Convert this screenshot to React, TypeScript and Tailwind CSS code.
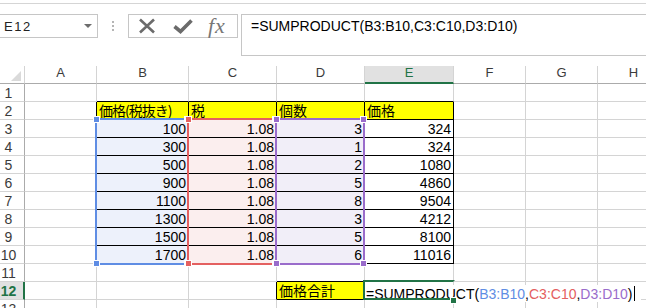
import React from "react";

const COLS = ["A", "B", "C", "D", "E", "F", "G", "H"];
const GRID = "grid grid-cols-[25px_72px_92px_88px_88px_89px_72px_72px_72px] w-max";

const B_VALS = ["100", "300", "500", "900", "1100", "1300", "1500", "1700"];
const D_VALS = ["3", "1", "2", "5", "8", "3", "5", "6"];
const E_VALS = ["324", "324", "1080", "4860", "9504", "4212", "8100", "11016"];

type Val = { text: string; jp?: boolean; tight?: boolean };

function valueAt(r: number, c: number): Val | null {
  if (r === 2) {
    if (c === 1) return { text: "価格(税抜き)", jp: true, tight: true };
    if (c === 2) return { text: "税", jp: true };
    if (c === 3) return { text: "個数", jp: true };
    if (c === 4) return { text: "価格", jp: true };
  }
  if (r >= 3 && r <= 10) {
    const i = r - 3;
    if (c === 1) return { text: B_VALS[i] };
    if (c === 2) return { text: "1.08" };
    if (c === 3) return { text: D_VALS[i] };
    if (c === 4) return { text: E_VALS[i] };
  }
  if (r === 12 && c === 3) return { text: "価格合計", jp: true };
  return null;
}

function cellCls(r: number, c: number) {
  const inTable = r >= 2 && r <= 10;
  const blackR = (inTable && c <= 4) || (r === 12 && (c === 2 || c === 3));
  const blackB = (c >= 1 && c <= 4 && r >= 1 && r <= 10) || (c === 3 && (r === 11 || r === 12));
  let bg = "";
  if ((r === 2 && c >= 1 && c <= 4) || (r === 12 && c === 3)) bg = "bg-[#ffff00]";
  else if (r >= 3 && r <= 10 && c === 1) bg = "bg-[#edf1fb]";
  else if (r >= 3 && r <= 10 && c === 2) bg = "bg-[#fbeeee]";
  else if (r >= 3 && r <= 10 && c === 3) bg = "bg-[#f1eef8]";
  return [
    "h-[18px] border-r border-b",
    blackR ? "border-r-black" : "border-r-[#d4d4d4]",
    blackB ? "border-b-black" : "border-b-[#d4d4d4]",
    bg,
  ].join(" ");
}

// range outline with the little corner squares
const Range = ({ box, fill }: { box: string; fill: string }) => {
  const sq = `absolute w-[5px] h-[5px] ring-1 ring-white ${fill}`;
  return (
    <div className={`absolute border-2 z-20 ${box}`}>
      <span className={`${sq} -left-[3px] -top-[3px]`} />
      <span className={`${sq} -right-[3px] -top-[3px]`} />
      <span className={`${sq} -left-[3px] -bottom-[3px]`} />
      <span className={`${sq} -right-[3px] -bottom-[3px]`} />
    </div>
  );
};

function FormulaBar() {
  return (
    <div className="pt-[3px]">
      <div className="border-t border-[#d5d5d5] pt-[10px] flex items-start">
        {/* Name box */}
        <div className="w-[98px] h-[24px] border-y border-r border-[#c6c6c6] flex items-center justify-between pl-[4px] pr-[5px]">
          <span className="text-[13px] leading-none tracking-[1.5px] text-[#222]">E12</span>
          <span className="w-0 h-0 border-x-[4px] border-x-transparent border-t-[4px] border-t-[#6d6d6d]" />
        </div>

        <div className="ml-[14px] mt-[7px] flex flex-col gap-[2px]">
          <span className="w-[2px] h-[2px] bg-[#b5b5b5]" />
          <span className="w-[2px] h-[2px] bg-[#b5b5b5]" />
          <span className="w-[2px] h-[2px] bg-[#b5b5b5]" />
        </div>

        {/* cancel / enter / fx */}
        <div className="ml-[14px] w-[110px] h-[24px] border border-[#c6c6c6] flex items-center">
          <svg className="ml-[9px]" width="18" height="16" viewBox="0 0 18 16">
            <path d="M2 1.5L16 14.5M16 1.5L2 14.5" stroke="#6b6b6b" strokeWidth="2.6" fill="none" />
          </svg>
          <svg className="ml-[17px]" width="20" height="15" viewBox="0 0 20 15">
            <path d="M1.5 7.5L7.5 12.5L18.5 1.5" stroke="#6b6b6b" strokeWidth="3.6" fill="none" />
          </svg>
          <span className="ml-[15px] font-['Liberation_Serif',serif] italic text-[22px] leading-none text-[#777] tracking-[1px]">
            fx
          </span>
        </div>

        {/* formula input */}
        <div className="ml-[3px] flex-1 h-[42px] border-y border-l border-[#c6c6c6] pl-[9px] pt-[3px] text-[14px] leading-[17px] whitespace-nowrap">
          =SUMPRODUCT(B3:B10,C3:C10,D3:D10)
        </div>
      </div>
    </div>
  );
}

function Sheet() {
  const rows = Array.from({ length: 13 }, (_, i) => i + 1);
  return (
    <div className="relative mt-[10px]">
      {/* column headers */}
      <div className={GRID}>
        <div className="h-[18px] border-r border-r-[#d4d4d4] border-b border-b-[#ababab] flex justify-end items-end pr-[3px] pb-[2px]">
          <svg width="10" height="10" viewBox="0 0 10 10">
            <polygon points="10,0 10,10 0,10" fill="#dadada" />
          </svg>
        </div>
        {COLS.map((col, c) =>
          c === 4 ? (
            <div
              key={col}
              className="h-[18px] bg-[#e1e1e1] border-r border-r-[#d4d4d4] border-b-2 border-b-[#217346] text-center text-[13px] leading-[14px] text-[#217346]"
            >
              {col}
            </div>
          ) : (
            <div
              key={col}
              className="h-[18px] border-r border-r-[#d4d4d4] border-b border-b-[#ababab] text-center text-[13px] leading-[14px] text-[#3b3b3b]"
            >
              {col}
            </div>
          )
        )}
      </div>

      {rows.map((r) => (
        <div key={r} className={GRID}>
          {r === 12 ? (
            <div className="h-[18px] bg-[#e1e1e1] border-r-2 border-r-[#217346] border-b border-b-[#d4d4d4]">
              <span className="block w-[17px] text-center text-[14px] leading-[19px] font-bold text-[#217346]">{r}</span>
            </div>
          ) : (
            <div className="h-[18px] border-r border-r-[#ababab] border-b border-b-[#d4d4d4]">
              <span className="block w-[17px] text-center text-[14px] leading-[19px] text-[#3b3b3b]">{r}</span>
            </div>
          )}
          {COLS.map((col, c) => {
            if (r === 12 && c === 4) {
              // cell being edited: text runs over F..H
              return (
                <div key={col} className={`${cellCls(r, c)} relative z-30 whitespace-nowrap`}>
                  <span className="inline-flex items-start h-[17px] bg-white pl-px pr-[6px] text-[14px] leading-[19px]">
                    <span>=SUMPRODUCT(</span>
                    <span className="text-[#5f8de4]">B3:B10</span>
                    <span>,</span>
                    <span className="text-[#e46060]">C3:C10</span>
                    <span>,</span>
                    <span className="text-[#9a6ccb]">D3:D10</span>
                    <span>)</span>
                    <span className="ml-px mt-px w-px h-[15px] bg-black" />
                  </span>
                </div>
              );
            }
            const v = valueAt(r, c);
            return (
              <div key={col} className={cellCls(r, c)}>
                {v &&
                  (v.jp ? (
                    <div
                      className={`pl-[2px] font-['Noto_Sans_CJK_JP',sans-serif] text-[14px] leading-[17px] whitespace-nowrap ${
                        v.tight ? "tracking-[-1px]" : ""
                      }`}
                    >
                      {v.text}
                    </div>
                  ) : (
                    <div className="pr-[2px] text-right text-[14px] leading-[19px]">{v.text}</div>
                  ))}
              </div>
            );
          })}
        </div>
      ))}

      {/* reference highlights while editing E12 */}
      <Range box="left-[95px] top-[52px] w-[94px] h-[147px] border-[#5f8de4]" fill="bg-[#5f8de4]" />
      <Range box="left-[187px] top-[52px] w-[90px] h-[147px] border-[#e46060]" fill="bg-[#e46060]" />
      <Range box="left-[275px] top-[52px] w-[90px] h-[147px] border-[#9a6ccb]" fill="bg-[#9a6ccb]" />

      {/* active cell */}
      <div className="absolute left-[363px] top-[214px] w-[92px] h-[20px] border-2 border-[#217346] border-r-transparent z-40" />
      <span className="absolute left-[451px] top-[232px] w-[5px] h-[5px] bg-[#217346] ring-1 ring-white z-40" />
    </div>
  );
}

export default function App() {
  return (
    <div className="w-[646px] h-[308px] overflow-hidden bg-white text-black font-['Liberation_Sans','Noto_Sans_CJK_JP',sans-serif]">
      <FormulaBar />
      <Sheet />
    </div>
  );
}
